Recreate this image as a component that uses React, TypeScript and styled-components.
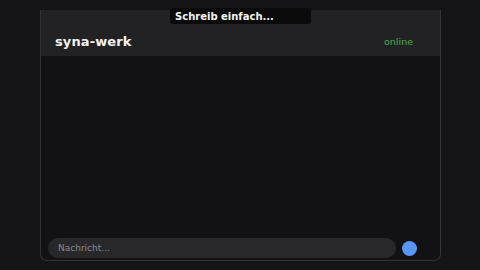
import styled, { createGlobalStyle } from 'styled-components';

const GlobalStyle = createGlobalStyle`
  html, body {
    margin: 0;
    padding: 0;
    background: #141417;
    font-family: 'DejaVu Sans', 'Noto Sans', sans-serif;
  }
`;

export default function App() {
  return (
    <>
      <GlobalStyle />
      <Page>
        <Panel>
          <Header>
            <Title>syna-werk</Title>
            <Status>online</Status>
          </Header>
          <Messages />
          <Composer>
            <MessageInput placeholder="Nachricht..." />
            <SendDot aria-label="Senden" />
          </Composer>
        </Panel>
        <Tooltip>Schreib einfach...</Tooltip>
      </Page>
    </>
  );
}

const Page = styled.div`
  position: relative;
  width: 480px;
  height: 270px;
  box-sizing: border-box;
  padding: 10px 39px 9px 40px;
  display: flex;
`;

const Panel = styled.div`
  flex: 1;
  display: flex;
  flex-direction: column;
  background: #121215;
  border: 1px solid #333336;
  border-top: none;
  border-radius: 0 0 7px 7px;
  overflow: hidden;
`;

const Header = styled.div`
  height: 46px;
  flex-shrink: 0;
  display: flex;
  align-items: center;
  justify-content: space-between;
  padding: 16px 28px 0 15px;
  box-sizing: border-box;
  background: #222225;
  margin: 0 -1px;
`;

const Title = styled.span`
  color: #f2f2f2;
  font-size: 13px;
  font-weight: bold;
  letter-spacing: 0.1px;
`;

const Status = styled.span`
  color: #4caf50;
  font-size: 9.5px;
`;

const Messages = styled.div`
  flex: 1;
`;

const Composer = styled.div`
  display: flex;
  align-items: center;
  gap: 6px;
  padding: 0 23px 2px 7px;
`;

const MessageInput = styled.input`
  flex: 1;
  height: 20px;
  box-sizing: border-box;
  border: none;
  outline: none;
  border-radius: 10px;
  background: #28282b;
  padding: 0 10px;
  font-family: 'DejaVu Sans', sans-serif;
  font-size: 9px;
  color: #ddd;

  &::placeholder {
    color: #8a8a8d;
  }
`;

const SendDot = styled.button`
  width: 15px;
  height: 15px;
  padding: 0;
  border: none;
  border-radius: 50%;
  background: #5897f3;
`;

const Tooltip = styled.div`
  position: absolute;
  top: 8px;
  left: 170px;
  width: 141px;
  height: 16px;
  box-sizing: border-box;
  padding: 0 5px;
  display: flex;
  align-items: center;
  background: #0b0b0c;
  border-radius: 3px;
  color: #f5f5f5;
  font-size: 10px;
  font-weight: bold;
`;
